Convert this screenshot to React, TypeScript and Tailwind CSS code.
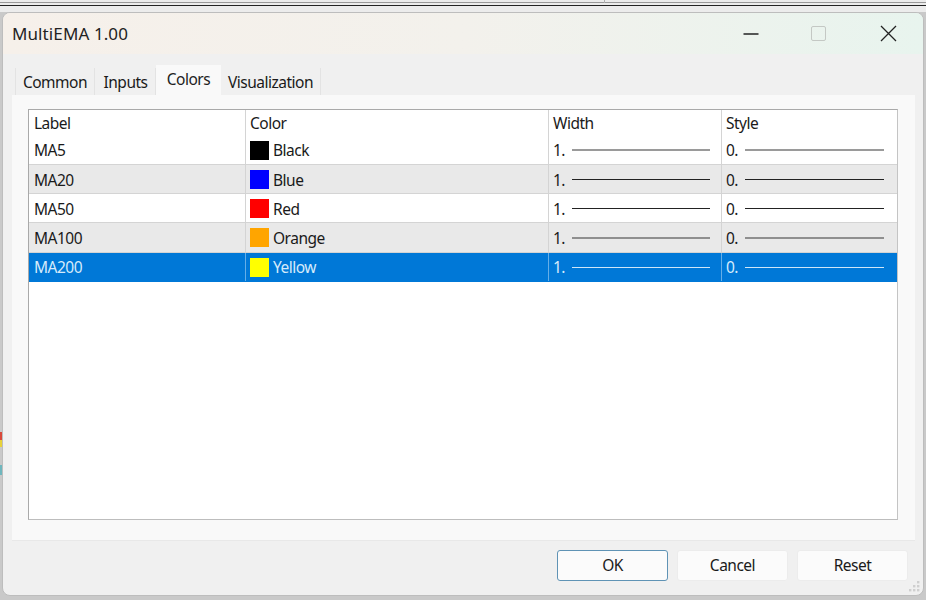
import React from 'react';

const rows = [
  { label: 'MA5', color: 'Black', swatch: 'bg-black', bg: 'bg-white', line: 'h-[2px] bg-[#9a9a9a]', height: 'h-[29px]', shift: 'pt-[2px]' },
  { label: 'MA20', color: 'Blue', swatch: 'bg-[#0000ff]', bg: 'bg-[#e9e9e9]', line: 'h-px bg-[#222222]', height: 'h-[29px]', shift: 'pt-[3px]' },
  { label: 'MA50', color: 'Red', swatch: 'bg-[#ff0000]', bg: 'bg-white', line: 'h-px bg-[#222222]', height: 'h-[29px]', shift: 'pt-[3px]' },
  { label: 'MA100', color: 'Orange', swatch: 'bg-[#ffa500]', bg: 'bg-[#e9e9e9]', line: 'h-[2px] bg-[#8f8f8f]', height: 'h-[30px]', shift: 'pt-[3px]' },
  { label: 'MA200', color: 'Yellow', swatch: 'bg-[#ffff00]', bg: 'bg-[#0078d7]', line: 'h-px bg-[#cfe6f8]', height: 'h-[29px]', shift: 'pt-[2px]', selected: true },
];

const tabs = ['Common', 'Inputs', 'Colors', 'Visualization'];

const cols = 'grid grid-cols-[216px_303px_173px_175px]';

const App = () => {
  return (
    <div className="relative w-[926px] h-[600px] overflow-hidden bg-[#c9c9c9] pt-[12px] pl-[2px] pr-[2px] pb-[4px] font-['Noto_Sans',sans-serif] text-[15.5px] tracking-[-0.5px] text-[#1a1a1a]">
      {/* desktop behind the dialog */}
      <div className="absolute left-0 right-0 top-0 h-[12px] bg-[#ececec]">
        <div className="h-[3px] border-b border-[#999999]" />
        <div className="h-[2px]" />
        <div className="h-px bg-[#222222]" />
      </div>
      <div className="absolute left-[604px] top-0 w-px h-[3px] bg-[#b0b0b0]" />
      <div className="absolute left-0 top-[432px] w-[2px] h-[8px] bg-[#d8483a]" />
      <div className="absolute left-0 top-[440px] w-[2px] h-[7px] bg-[#e8d23a]" />
      <div className="absolute left-0 top-[465px] w-[2px] h-[10px] bg-[#6fb6bd]" />

      <div className="relative flex flex-col h-full rounded-lg overflow-hidden border border-[#bdbdbd] bg-[#f0f0f0]">
        {/* title bar */}
        <div className="flex items-center h-[41px] shrink-0 bg-gradient-to-r from-[#f6f0ea] via-[#f3f1ec] to-[#e8f4ee]">
          <span className="ml-[9px] text-[17px] tracking-[0.1px] text-[#222222]">MultiEMA 1.00</span>
          <div className="ml-auto flex items-center">
            <svg width="16" height="16" viewBox="0 0 16 16" className="mr-[52px]">
              <path d="M0.5 8h15" stroke="#222222" strokeWidth="1.4" />
            </svg>
            <div className="w-[15px] h-[15px] rounded-[2px] border border-[#c4c8c4] mr-[54px]" />
            <svg width="17" height="17" viewBox="0 0 17 17" className="mr-[26px]">
              <path d="M1 1l15 15M16 1L1 16" stroke="#222222" strokeWidth="1.3" fill="none" />
            </svg>
          </div>
        </div>

        {/* tabs */}
        <div className="flex items-end h-[41px] shrink-0 pl-[12px]">
          {tabs.map((tab) =>
            tab === 'Colors' ? (
              <div key={tab} className="flex justify-center w-[65px] h-[30px] pt-[3px] bg-[#f9f9f9] text-[#222222]">
                {tab}
              </div>
            ) : (
              <div
                key={tab}
                className={`flex justify-center h-[27px] pt-[3px] border-r border-[#e3e3e3] bg-[#f0f0f0] ${
                  tab === 'Common' ? 'w-[80px] border-l' : tab === 'Inputs' ? 'w-[61px] pl-px' : 'w-[100px]'
                }`}
              >
                {tab}
              </div>
            )
          )}
        </div>

        {/* panel */}
        <div className="ml-[9px] mr-[8px] h-[446px] shrink-0 bg-[#f9f9f9] border-b border-[#e8e8e8] pt-[14px] pl-[16px] pr-[16px]">
          <div className="flex flex-col w-[870px] h-[411px] bg-white border border-[#a9a9a9] border-b-[#bdbdbd] border-r-[#c4c4c4]">
            <div className={`${cols} h-[26px] shrink-0 bg-white`}>
              {['Label', 'Color', 'Width', 'Style'].map((h, i) => (
                <div key={h} className={`pt-[2px] leading-[22px] ${i > 0 ? 'pl-[4px] border-l border-[#d4d4d4]' : 'pl-[5px]'}`}>
                  {h}
                </div>
              ))}
            </div>
            {rows.map((row) => (
              <div
                key={row.label}
                className={`${cols} ${row.height} shrink-0 border-b ${row.bg} ${
                  row.selected ? 'text-[#d6ebfb] border-[#0078d7]' : 'border-[#d4d4d4]'
                }`}
              >
                <div className="flex items-center pl-[5px]">
                  <span className={row.shift}>{row.label}</span>
                </div>
                <div className={`flex items-center pl-[4px] gap-[4px] border-l ${row.selected ? 'border-[#66aee7]' : 'border-[#d4d4d4]'}`}>
                  <span className={`w-[19px] h-[19px] ${row.swatch}`} />
                  <span className={row.shift}>{row.color}</span>
                </div>
                <div className={`flex items-center pl-[4px] border-l ${row.selected ? 'border-[#66aee7]' : 'border-[#d4d4d4]'}`}>
                  <span className={`w-[19px] ${row.shift}`}>1.</span>
                  <span className={`w-[138px] ${row.line}`} />
                </div>
                <div className={`flex items-center pl-[4px] border-l ${row.selected ? 'border-[#66aee7]' : 'border-[#d4d4d4]'}`}>
                  <span className={`w-[19px] ${row.shift}`}>0.</span>
                  <span className={`w-[139px] ${row.line}`} />
                </div>
              </div>
            ))}
          </div>
        </div>

        {/* footer buttons */}
        <div className="flex justify-end gap-[9px] pt-[9px] pr-[15px]">
          <button className="w-[111px] h-[31px] rounded-[3px] bg-[#fbfbfb] border border-[#5f93b5]">OK</button>
          <button className="w-[111px] h-[31px] rounded-[3px] bg-[#fbfbfb] border border-[#ececec]">Cancel</button>
          <button className="w-[111px] h-[31px] rounded-[3px] bg-[#fbfbfb] border border-[#ececec]">Reset</button>
        </div>

        {/* size grip */}
        <svg width="14" height="14" viewBox="0 0 14 14" className="absolute right-[2px] bottom-[2px]">
          {[[10, 2], [6, 6], [10, 6], [2, 10], [6, 10], [10, 10]].map(([x, y]) => (
            <rect key={`${x}-${y}`} x={x} y={y} width="2.4" height="2.4" fill="#cfcfcf" />
          ))}
        </svg>
      </div>
    </div>
  );
};

export default App;
